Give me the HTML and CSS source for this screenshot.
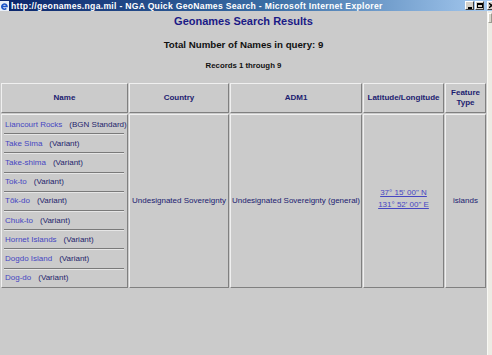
FILE: index.html
```html
<!DOCTYPE html>
<html lang="en">
<head>
    <meta charset="UTF-8">
    <title>NGA Quick GeoNames Search</title>
    <link rel="stylesheet" href="styles.css">
</head>
<body>
    <div class="window">
        <div class="titlebar">
            <svg class="ie-icon" width="9" height="10" viewBox="0 0 9 10">
                <rect x="0" y="0" width="9" height="10" fill="#e8eef8"/>
                <path d="M2 5.5 H7 A2.6 2.6 0 1 0 6.3 7.4" fill="none" stroke="#1d55c8" stroke-width="1.6"/>
            </svg>
            <span class="title-text">http://geonames.nga.mil - NGA Quick GeoNames Search - Microsoft Internet Explorer</span>
            <div class="win-buttons">
                <span class="win-btn"><i class="glyph-min"></i></span>
                <span class="win-btn"><i class="glyph-max"></i></span>
                <span class="win-btn close">
                    <svg width="5" height="5" viewBox="0 0 5 5"><path d="M0 0 L5 5 M5 0 L0 5" stroke="#000" stroke-width="1.3"/></svg>
                </span>
            </div>
        </div>

        <div class="viewport">
            <div class="page">
                <h1 class="page-title">Geonames Search Results</h1>
                <p class="total">Total Number of Names in query: 9</p>
                <p class="records">Records 1 through 9</p>

                <table class="results">
                    <tr>
                        <th class="col-name">Name</th>
                        <th class="col-country">Country</th>
                        <th class="col-adm">ADM1</th>
                        <th class="col-latlon">Latitude/Longitude</th>
                        <th class="col-type">Feature<br>Type</th>
                    </tr>
                    <tr>
                        <td class="names">
                            <div class="name-row"><a href="#">Liancourt Rocks</a><span class="kind">(BGN Standard)</span></div>
                            <hr>
                            <div class="name-row"><a href="#">Take Sima</a><span class="kind">(Variant)</span></div>
                            <hr>
                            <div class="name-row"><a href="#">Take-shima</a><span class="kind">(Variant)</span></div>
                            <hr>
                            <div class="name-row"><a href="#">Tok-to</a><span class="kind">(Variant)</span></div>
                            <hr>
                            <div class="name-row"><a href="#">Tŏk-do</a><span class="kind">(Variant)</span></div>
                            <hr>
                            <div class="name-row"><a href="#">Chuk-to</a><span class="kind">(Variant)</span></div>
                            <hr>
                            <div class="name-row"><a href="#">Hornet Islands</a><span class="kind">(Variant)</span></div>
                            <hr>
                            <div class="name-row"><a href="#">Dogdo Island</a><span class="kind">(Variant)</span></div>
                            <hr>
                            <div class="name-row"><a href="#">Dog-do</a><span class="kind">(Variant)</span></div>
                        </td>
                        <td class="plain">Undesignated Sovereignty</td>
                        <td class="plain">Undesignated Sovereignty (general)</td>
                        <td class="coords"><a href="#">37° 15' 00" N<br>131° 52' 00" E</a></td>
                        <td class="plain">islands</td>
                    </tr>
                </table>
            </div>
            <div class="scrollbar">
                <div class="scroll-up"></div>
            </div>
        </div>
    </div>
</body>
</html>
```

FILE: styles.css
```css
* {
    margin: 0;
    padding: 0;
    box-sizing: border-box;
}

body {
    width: 492px;
    height: 355px;
    overflow: hidden;
    background-color: #cbcbcb;
    font-family: 'Liberation Sans', Arial, sans-serif;
    color: #1f1f6e;
}

.window {
    display: flex;
    flex-direction: column;
    height: 100%;
}

/* window chrome */
.titlebar {
    height: 11px;
    display: flex;
    align-items: center;
    background: linear-gradient(to right, #0a246a 0%, #3a6ea5 55%, #a6caf0 100%);
    color: white;
    overflow: hidden;
}

.ie-icon {
    margin: 0 2px 0 0;
    flex-shrink: 0;
}

.title-text {
    font-size: 8.6px;
    font-weight: bold;
    letter-spacing: 0.3px;
    white-space: nowrap;
    flex: 1;
}

.win-buttons {
    display: flex;
    gap: 1px;
    margin-right: -4px;
}

.win-btn {
    width: 9px;
    height: 9px;
    background-color: #d4d0c8;
    border: 1px solid;
    border-color: #fff #404040 #404040 #fff;
    display: flex;
    align-items: center;
    justify-content: center;
}

.win-btn.close {
    margin-left: 2px;
}

.glyph-min {
    width: 4px;
    height: 2px;
    background: #000;
    margin-top: 4px;
}

.glyph-max {
    width: 6px;
    height: 5px;
    border: 1px solid #000;
    border-top-width: 2px;
}

.viewport {
    flex: 1;
    display: flex;
}

.page {
    width: 487px;
    text-align: center;
}

.scrollbar {
    width: 5px;
    background-color: #ecebe4;
    border-left: 1px solid #f8f8f4;
    padding-top: 2px;
}

.scroll-up {
    height: 10px;
    background-color: #d8d6cc;
    border: 1px solid;
    border-color: #fff #9a9a90 #9a9a90 #fff;
}

/* page content */
.page-title {
    font-size: 11px;
    line-height: 14px;
    color: #1a1a86;
    margin-top: 3px;
}

.total {
    font-size: 9.7px;
    font-weight: bold;
    line-height: 12px;
    color: #111;
    margin-top: 11px;
}

.records {
    font-size: 7.8px;
    font-weight: bold;
    line-height: 10px;
    color: #111;
    margin-top: 10px;
}

.results {
    margin-top: 11px;
    width: 487px;
    table-layout: fixed;
    border-collapse: separate;
    border-spacing: 1px;
    font-size: 8px;
}

.results th,
.results td {
    border: 1px solid;
    border-color: #f0f0f0 #808080 #808080 #f0f0f0;
}

.results th {
    height: 30px;
    color: #1c1c70;
    font-size: 8px;
    line-height: 10px;
    font-weight: bold;
}

.col-name { width: 127px; }
.col-country { width: 100px; }
.col-adm { width: 132px; }
.col-latlon { width: 81px; }
.col-type { width: 41px; }

.results td {
    vertical-align: middle;
}

.results td.names {
    text-align: left;
    padding: 1px 3px 0 2px;
}

.name-row {
    line-height: 10px;
    padding: 3.6px 0 3.6px 1px;
    white-space: nowrap;
}

.name-row a {
    color: #4646c2;
    text-decoration: none;
}

.kind {
    color: #24246c;
    margin-left: 7px;
}

.names hr {
    border: none;
    border-top: 1px solid #7a7a7a;
    border-bottom: 1px solid #e6e6e6;
    height: 2px;
}

.plain {
    color: #202070;
}

.coords a {
    color: #4646c2;
    text-decoration: underline;
    line-height: 12px;
    display: inline-block;
    margin-top: -3px;
}
```
